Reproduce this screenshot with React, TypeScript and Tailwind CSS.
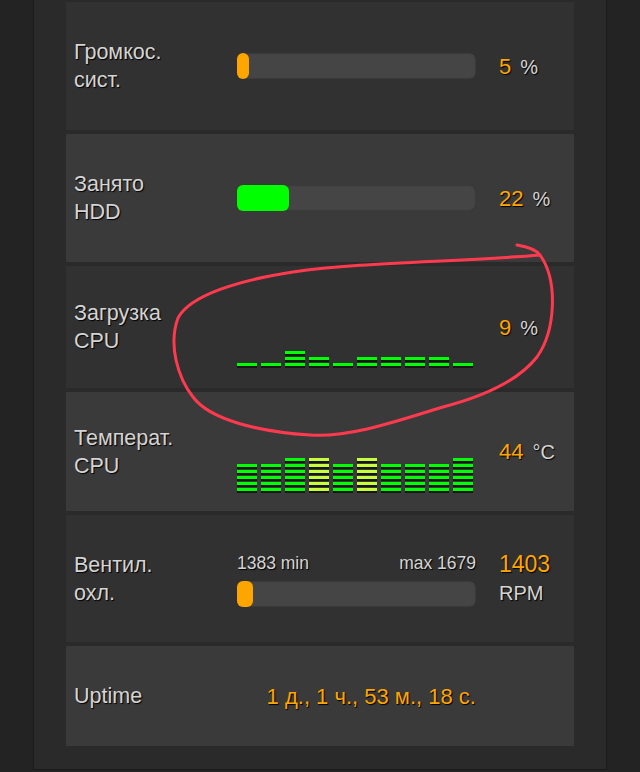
import React from 'react';

const font = { fontFamily: '"Liberation Sans", Arial, sans-serif' };
const shadow = '[text-shadow:1px_1px_1px_#000]';

const cpuLoad = [1, 1, 3, 2, 1, 2, 2, 2, 2, 1];
const cpuTemp = [5, 5, 6, 6, 5, 6, 5, 5, 5, 6];

function Bar({ fill, color }: { fill: number; color: string }) {
  return (
    <div className="h-[26px] w-[239px] rounded-[6px] bg-[#454545] shadow-[inset_0_0_2px_rgba(0,0,0,0.5)]">
      <div className={`h-full rounded-[6px] ${color}`} style={{ width: fill }} />
    </div>
  );
}

function Meter({ levels, warm = [] }: { levels: number[]; warm?: number[] }) {
  return (
    <div className="flex h-[80px] items-end gap-[4px]">
      {levels.map((n, i) => (
        <div key={i} className="flex w-[20px] flex-col-reverse gap-[3px] pb-[1px]">
          {Array.from({ length: n }).map((_, j) => (
            <div
              key={j}
              className={`h-[3px] w-[20px] shadow-[0_2px_0_#161616] ${
                warm.includes(i) ? 'bg-[#c8ff3c]' : 'bg-[#00ff00]'
              }`}
            />
          ))}
        </div>
      ))}
    </div>
  );
}

function Value({ num, unit }: { num: string; unit: string }) {
  return (
    <div className={`whitespace-nowrap ${shadow}`}>
      <span className="text-[22px] text-[#ffa500]">{num}</span>
      <span className="ml-[9px] text-[20px] text-[#d4d4d4]">{unit}</span>
    </div>
  );
}

function Row({ label, h, light, children, value }: { label: React.ReactNode; h: string; light?: boolean; children?: React.ReactNode; value?: React.ReactNode }) {
  return (
    <div className={`flex items-center pl-[8px] ${h} ${light ? 'bg-[#3a3a3a]' : 'bg-[#313131]'}`}>
      <div className={`w-[163px] text-[21.5px] leading-[28px] text-[#d4d4d4] ${shadow}`}>{label}</div>
      <div className="w-[239px]">{children}</div>
      <div className="ml-[23px]">{value}</div>
    </div>
  );
}

export default function App() {
  return (
    <div className="relative min-h-[772px] overflow-hidden bg-[#232323]" style={font}>
      <div className="ml-[33px] w-[574px] border-x border-b border-[#1b1b1b] bg-[#2a2a2a] px-[32px] pt-[2px] pb-[23px]">
        <div className="flex flex-col gap-[4px]">
          <Row h="h-[128px]" label={<>Громкос.<br />сист.</>} value={<Value num="5" unit="%" />}>
            <Bar fill={12} color="bg-[#ffa500]" />
          </Row>
          <Row h="h-[128px]" light label={<>Занято<br />HDD</>} value={<Value num="22" unit="%" />}>
            <Bar fill={52} color="bg-[#00ff00]" />
          </Row>
          <Row h="h-[122px]" label={<>Загрузка<br />CPU</>} value={<Value num="9" unit="%" />}>
            <Meter levels={cpuLoad} />
          </Row>
          <Row h="h-[119px]" light label={<>Температ.<br />CPU</>} value={<Value num="44" unit="°C" />}>
            <Meter levels={cpuTemp} warm={[3, 5]} />
          </Row>
          <Row
            h="h-[127px]"
            label={<>Вентил.<br />охл.</>}
            value={
              <div className={`leading-[29px] ${shadow}`}>
                <div className="text-[23px] text-[#ffa500]">1403</div>
                <div className="text-[20px] text-[#d4d4d4]">RPM</div>
              </div>
            }
          >
            <div className={`mb-[5px] flex justify-between text-[17.5px] text-[#d4d4d4] ${shadow}`}>
              <span>1383 min</span>
              <span>max 1679</span>
            </div>
            <Bar fill={16} color="bg-[#ffa500]" />
          </Row>
          <Row h="h-[100px]" light label="Uptime">
            <div className={`whitespace-nowrap text-right text-[22px] text-[#ffa500] ${shadow}`}>1 д., 1 ч., 53 м., 18 с.</div>
          </Row>
        </div>
      </div>

      {/* hand-drawn marker circle */}
      <svg className="pointer-events-none absolute left-0 top-0" width="640" height="772" viewBox="0 0 640 772" fill="none">
        <path
          d="M517 245 Q535 248 540 255 C558 280 556 330 537 357 C515 385 470 400 443 407 C400 420 350 438 310 435 C260 432 210 420 193 397 C178 378 168 345 178 318 C190 295 240 280 293 272 C360 262 460 262 540 255"
          stroke="#ff3a4f"
          strokeWidth="3"
          strokeLinecap="round"
          strokeLinejoin="round"
        />
      </svg>
    </div>
  );
}
